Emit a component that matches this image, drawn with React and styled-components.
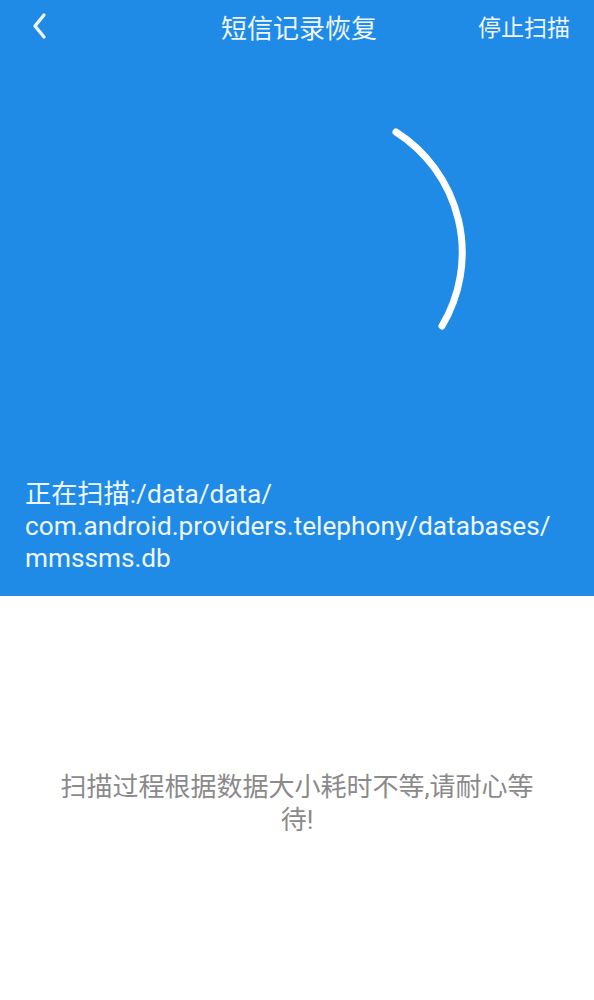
import React from 'react';
import styled, { createGlobalStyle } from 'styled-components';

const Global = createGlobalStyle`
    html, body {
        margin: 0;
        padding: 0;
        background: #ffffff;
        font-family: Roboto, "Noto Sans CJK SC", "Noto Sans", sans-serif;
    }
`;

const Page = styled.div`
    width: 594px;
    min-height: 1000px;
    display: flex;
    flex-direction: column;
    background: #ffffff;
`;

const Hero = styled.section`
    height: 596px;
    background-color: #1f8be6;
    color: #eef6ff;
    display: flex;
    flex-direction: column;
`;

const TopBar = styled.header`
    height: 52px;
    display: grid;
    grid-template-columns: 120px 1fr 120px;
    align-items: center;
    padding: 0 24px 0 28px;
    box-sizing: border-box;
`;

const Back = styled.button`
    border: 0;
    background: none;
    padding: 0;
    width: 24px;
    height: 30px;
    color: #eef6ff;
    justify-self: start;
    display: flex;
`;

const Title = styled.h1`
    margin: 0;
    font-size: 26px;
    font-weight: 400;
    text-align: center;
`;

const Action = styled.span`
    font-size: 23px;
    text-align: right;
`;

const Stage = styled.div`
    flex: 1;
    display: flex;
    justify-content: flex-start;
    padding-left: 318px;
`;

const Spinner = styled.svg`
    width: 200px;
    height: 380px;
`;

const ScanPath = styled.p`
    margin: 0;
    padding: 0 25px 22px;
    font-size: 26.2px;
    line-height: 32px;
    word-break: break-all;
`;

const Notice = styled.p`
    margin: 175px 0 0;
    padding: 0 52px;
    color: #8a8a8a;
    font-size: 26px;
    line-height: 33px;
    text-align: center;
`;

function App() {
    return (
        <Page>
            <Global />
            <Hero>
                <TopBar>
                    <Back aria-label="back">
                        <svg width="24" height="30" viewBox="0 0 24 30" fill="none">
                            <path d="M16 4 L7 15 L16 26" stroke="currentColor" strokeWidth="3.4" strokeLinecap="round" strokeLinejoin="round" />
                        </svg>
                    </Back>
                    <Title>短信记录恢复</Title>
                    <Action>停止扫描</Action>
                </TopBar>
                <Stage>
                    <Spinner viewBox="0 0 200 380">
                        <path d="M 78 80 A 143 143 0 0 1 124 274" fill="none" stroke="#ffffff" strokeWidth="7" strokeLinecap="round" />
                    </Spinner>
                </Stage>
                <ScanPath>
                    正在扫描:/data/data/<br />
                    com.android.providers.telephony/databases/<br />
                    mmssms.db
                </ScanPath>
            </Hero>
            <Notice>扫描过程根据数据大小耗时不等,请耐心等待!</Notice>
        </Page>
    );
}

export default App;
